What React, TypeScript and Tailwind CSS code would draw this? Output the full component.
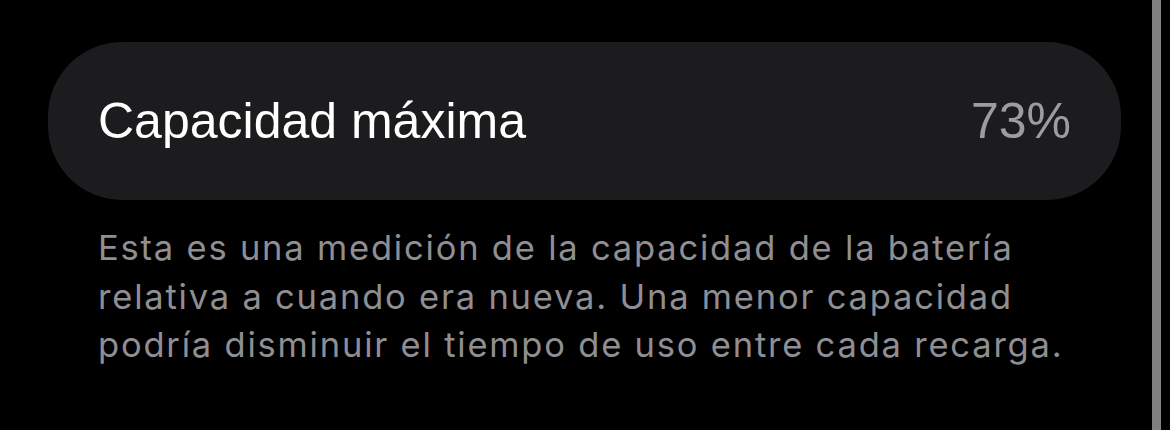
export default function App() {
  return (
    <div
      className="w-[1170px] h-[430px] bg-black flex overflow-hidden"
      style={{ fontFamily: '"Liberation Sans", Arial, sans-serif' }}
    >
      <div className="flex-1 pl-[48px] pr-[31px] pt-[42px]">
        <div className="h-[158px] rounded-[74px] bg-[#1c1c1e] flex items-center justify-between px-[50px]">
          <span className="text-[50px] leading-none text-white">Capacidad máxima</span>
          <span className="text-[50px] leading-none text-[#9c9ca1]">73%</span>
        </div>
        <p
          className="mt-[24px] pl-[50px] text-[34.5px] leading-[48.5px] tracking-[1.8px] text-[#8f8f93] whitespace-nowrap"
          style={{ fontFamily: 'Inter, "Liberation Sans", sans-serif' }}
        >
          Esta es una medición de la capacidad de la batería
          <br />
          relativa a cuando era nueva. Una menor capacidad
          <br />
          podría disminuir el tiempo de uso entre cada recarga.
        </p>
      </div>
      <div className="w-[9px] h-full bg-[#808080]" />
      <div className="w-[9px] h-full" />
    </div>
  );
}
